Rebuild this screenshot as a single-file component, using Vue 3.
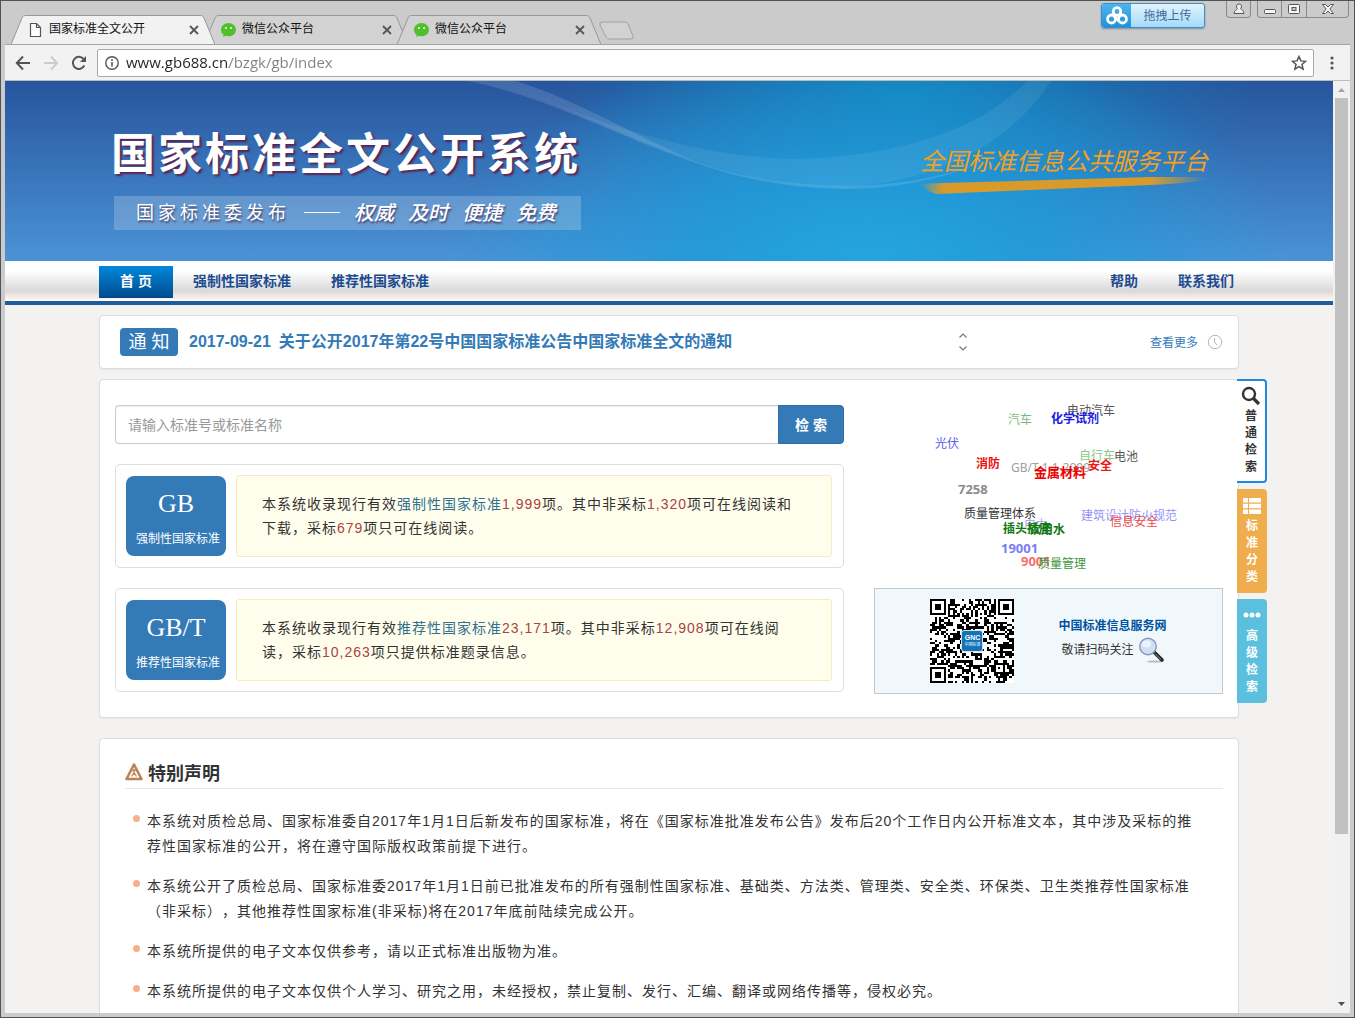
<script setup>
import { ref } from 'vue'

const tabs = [
  { title: '国家标准全文公开', icon: 'page', active: true },
  { title: '微信公众平台', icon: 'wechat', active: false },
  { title: '微信公众平台', icon: 'wechat', active: false },
]

const url = ref('www.gb688.cn/bzgk/gb/index')
const keyword = ref('')

const tags = [
  { text: '汽车', x: 134, y: 15, color: '#7fb97f' },
  { text: '电动汽车', x: 193, y: 6, color: '#555555' },
  { text: '化学试剂', x: 177, y: 14, color: '#1a1ae6', bold: true },
  { text: '光伏', x: 61, y: 39, color: '#5c5cf0' },
  { text: '消防', x: 102, y: 59, color: '#f01010', bold: true },
  { text: 'GB/T 1.1-2009', x: 137, y: 63, color: '#a0a0a0' },
  { text: '自行车', x: 205, y: 51, color: '#8cc88c' },
  { text: '电池', x: 240, y: 52, color: '#555555' },
  { text: '金属材料', x: 160, y: 67, color: '#ee0000', bold: true, big: true },
  { text: '安全', x: 214, y: 61, color: '#ee1515', bold: true },
  { text: '7258', x: 84, y: 84, color: '#8c8c8c', bold: true, big: true },
  { text: '质量管理体系', x: 90, y: 109, color: '#333333' },
  { text: '电力', x: 150, y: 120, color: '#a8a8ff' },
  { text: '建筑设计防火规范', x: 207, y: 111, color: '#9494f8' },
  { text: '信息安全', x: 236, y: 117, color: '#f04848' },
  { text: '插头插座', x: 129, y: 124, color: '#0f7a0f', bold: true },
  { text: '饮用水', x: 155, y: 125, color: '#0f7a0f', bold: true },
  { text: '19001', x: 127, y: 143, color: '#7d7df2', bold: true, big: true },
  { text: '9001', x: 147, y: 156, color: '#f57070', bold: true, big: true },
  { text: '质量管理', x: 164, y: 159, color: '#3c963c' },
]

const statements = [
  '本系统对质检总局、国家标准委自2017年1月1日后新发布的国家标准，将在《国家标准批准发布公告》发布后20个工作日内公开标准文本，其中涉及采标的推荐性国家标准的公开，将在遵守国际版权政策前提下进行。',
  '本系统公开了质检总局、国家标准委2017年1月1日前已批准发布的所有强制性国家标准、基础类、方法类、管理类、安全类、环保类、卫生类推荐性国家标准（非采标），其他推荐性国家标准(非采标)将在2017年底前陆续完成公开。',
  '本系统所提供的电子文本仅供参考，请以正式标准出版物为准。',
  '本系统所提供的电子文本仅供个人学习、研究之用，未经授权，禁止复制、发行、汇编、翻译或网络传播等，侵权必究。',
]

const QR_SIZE = 37

function finderCell(x, y, left, top) {
  const dx = x - left
  const dy = y - top
  if (dx < -1 || dy < -1 || dx > 7 || dy > 7) return null
  const d = Math.max(Math.abs(dx - 3), Math.abs(dy - 3))
  return d === 3 || d <= 1
}

function buildQr() {
  let seed = 20170921
  let path = ''
  for (let y = 0; y < QR_SIZE; y++) {
    for (let x = 0; x < QR_SIZE; x++) {
      seed = (seed * 1103515245 + 12345) % 2147483648
      let on = seed / 2147483648 > 0.48
      if (x === 6) on = y % 2 === 0
      if (y === 6) on = x % 2 === 0
      const ring = Math.max(Math.abs(x - 30), Math.abs(y - 30))
      if (ring <= 2) on = ring !== 1
      for (const [l, t] of [[0, 0], [QR_SIZE - 7, 0], [0, QR_SIZE - 7]]) {
        const cell = finderCell(x, y, l, t)
        if (cell !== null) on = cell
      }
      if (on) path += `M${x} ${y}h1v1h-1z`
    }
  }
  return path
}

const qrPath = buildQr()
</script>

<template>
  <div class="window" lang="zh-CN">
    <header class="titlebar">
      <div class="tabs">
        <div v-for="(tab, i) in tabs" :key="i" class="tab" :class="{ active: tab.active }">
          <svg class="tab-shape" viewBox="0 0 204 29" preserveAspectRatio="none" aria-hidden="true">
            <path d="M0 29.500L11 3C12 1 13 .5 15 .5H189C191 .5 192 1 193 3L204 29.500" />
          </svg>
          <svg v-if="tab.icon === 'page'" class="tab-icon" viewBox="0 0 16 16" aria-hidden="true">
            <path d="M2.500 1.500h6l4 4v9h-10zM8.500 1.500v4h4" fill="#fff" stroke="#555" stroke-width="1.200" />
          </svg>
          <svg v-else class="tab-icon" viewBox="0 0 16 16" aria-hidden="true">
            <path d="M7.500 1C3.400 1 0 4 0 7.700c0 2.100 1 3.900 2.600 5.100L2.200 15l2.500-1.200c.9.300 1.800.5 2.800.5 4.200 0 7.500-3 7.500-6.600S11.700 1 7.500 1z" fill="#4fc02c" />
            <circle cx="5" cy="6" r="1" fill="#fff" /><circle cx="10" cy="6" r="1" fill="#fff" />
          </svg>
          <span class="tab-title">{{ tab.title }}</span>
          <button class="tab-close" aria-label="关闭标签页">
            <svg viewBox="0 0 10 10"><path d="M1 1l8 8M9 1l-8 8" stroke="#555" stroke-width="1.800" /></svg>
          </button>
        </div>
        <button class="new-tab" aria-label="新标签页">
          <svg viewBox="0 0 36 19"><path d="M3 1h23q2 0 3 2l5 12q1 3-2 3H10q-2 0-3-2L1 4q-1-3 2-3z" fill="#d2d2d2" stroke="#a2a2a2" /></svg>
        </button>
      </div>
      <div class="title-tools">
        <button class="upload">
          <span class="upload-logo">
            <svg viewBox="0 0 22 20" fill="none" stroke="#fff" stroke-width="2.800">
              <circle cx="11" cy="5.500" r="3.800" /><circle cx="5.500" cy="13" r="4" /><circle cx="16.500" cy="13" r="4" /><path d="M8 10l5 5" />
            </svg>
          </span>
          <span class="upload-text">拖拽上传</span>
        </button>
        <button class="win-btn user" aria-label="用户">
          <svg viewBox="0 0 12 12"><path d="M6 1a2.500 2.500 0 0 1 1.700 4.400C8 7 11 7 11 10.500H1C1 7 4 7 4.300 5.400A2.500 2.500 0 0 1 6 1z" fill="#eee" stroke="#555" /></svg>
        </button>
        <div class="win-group">
          <button class="win-btn" aria-label="最小化">
            <svg viewBox="0 0 12 12"><rect x=".5" y="6.500" width="11" height="4" rx="1" fill="#f6f6f6" stroke="#555" /></svg>
          </button>
          <button class="win-btn" aria-label="最大化">
            <svg viewBox="0 0 12 12"><rect x=".5" y="1.500" width="11" height="9" rx="1" fill="#f6f6f6" stroke="#555" /><rect x="4" y="4.500" width="4" height="3" fill="#ccc" stroke="#555" /></svg>
          </button>
          <button class="win-btn close" aria-label="关闭">
            <svg viewBox="0 0 12 12"><path d="M.5 1.500h3L6 4l2.500-2.500h3L7.800 6l3.700 4.500h-3L6 8l-2.500 2.500h-3L4.200 6z" fill="#f6f6f6" stroke="#555" /></svg>
          </button>
        </div>
      </div>
    </header>

    <div class="toolbar">
      <button class="tool" aria-label="后退">
        <svg viewBox="0 0 16 16"><path d="M15 8H2M8 1.500L1.800 8 8 14.500" fill="none" stroke="#555" stroke-width="2" /></svg>
      </button>
      <button class="tool" aria-label="前进">
        <svg viewBox="0 0 16 16"><path d="M1 8h13M8 1.500L14.200 8 8 14.500" fill="none" stroke="#ccc" stroke-width="2" /></svg>
      </button>
      <button class="tool" aria-label="刷新">
        <svg viewBox="0 0 16 16"><path d="M13.300 10.500A6 6 0 1 1 12.500 4" fill="none" stroke="#555" stroke-width="2" /><path d="M15 1v6H9z" fill="#555" /></svg>
      </button>
      <div class="omnibox">
        <svg class="info" viewBox="0 0 14 14" aria-hidden="true"><circle cx="7" cy="7" r="6.200" fill="none" stroke="#555" stroke-width="1.400" /><path d="M7 6v4.500M7 3.300v1.600" stroke="#555" stroke-width="1.600" /></svg>
        <input v-model="url" type="text" class="url" aria-label="地址栏" />
        <button class="star" aria-label="收藏">
          <svg viewBox="0 0 16 16"><path d="M8 1.500l1.900 4.400 4.700.4-3.600 3.100 1.100 4.700L8 11.600l-4.100 2.500L5 9.400 1.400 6.300l4.700-.4z" fill="none" stroke="#555" stroke-width="1.500" /></svg>
        </button>
      </div>
      <button class="menu" aria-label="菜单">
        <svg viewBox="0 0 4 14" fill="#555"><circle cx="2" cy="2" r="1.600" /><circle cx="2" cy="7" r="1.600" /><circle cx="2" cy="12" r="1.600" /></svg>
      </button>
    </div>

    <div class="viewport">
      <main class="page">
        <div class="banner">
          <svg class="swoosh" viewBox="0 0 1328 180" preserveAspectRatio="xMidYMid slice" aria-hidden="true">
            <path d="M500 0C580 40 690 76 790 78C890 76 975 50 1022 0H1046C1000 70 920 104 830 106C730 104 630 60 500 0z" fill="#fff" fill-opacity=".07" />
            <path d="M462 0C540 15 600 50 680 78C770 112 880 122 975 82C880 118 760 108 680 76C610 44 560 14 510 0z" fill="#fff" fill-opacity=".13" />
          </svg>
          <div class="container banner-inner">
            <div class="brand">
              <h1>国家标准全文公开系统</h1>
              <p class="slogan">
                <span class="issuer">国家标准委发布</span>
                <span class="dash"></span>
                <em>权威</em><em>及时</em><em>便捷</em><em>免费</em>
              </p>
            </div>
            <div class="platform">
              <span>全国标准信息公共服务平台</span>
              <svg viewBox="0 0 288 18" preserveAspectRatio="none" aria-hidden="true">
                <defs>
                  <linearGradient id="brush"><stop offset="0" stop-color="#e39a22" stop-opacity="0" /><stop offset=".08" stop-color="#d99a2c" /><stop offset=".8" stop-color="#d99a2c" /><stop offset="1" stop-color="#d99a2c" stop-opacity="0" /></linearGradient>
                </defs>
                <path d="M0 7Q20 6 60 5L230 0Q270-1 288 1Q280 6 230 8L110 13L16 17Q6 14 0 7z" fill="url(#brush)" />
              </svg>
            </div>
          </div>
        </div>

        <nav class="nav">
          <div class="container nav-inner">
            <a href="#" class="home">首 页</a>
            <a href="#" class="link">强制性国家标准</a>
            <a href="#" class="link">推荐性国家标准</a>
            <div class="nav-right">
              <a href="#">帮助</a>
              <a href="#">联系我们</a>
            </div>
          </div>
        </nav>

        <div class="container content">
          <section class="card notice">
            <span class="notice-badge">通 知</span>
            <a href="#" class="notice-link"><span>2017-09-21</span><span>关于公开2017年第22号中国国家标准公告中国家标准全文的通知</span></a>
            <div class="pager">
              <button aria-label="上一条"><svg viewBox="0 0 8 5"><path d="M.5 4.500L4 1l3.500 3.500" fill="none" stroke="#777" stroke-width="1.200" /></svg></button>
              <button aria-label="下一条"><svg viewBox="0 0 8 5"><path d="M.5.5L4 4 7.500.5" fill="none" stroke="#777" stroke-width="1.200" /></svg></button>
            </div>
            <a href="#" class="more">查看更多</a>
            <svg class="clock" viewBox="0 0 16 16" aria-hidden="true"><circle cx="8" cy="8" r="6.700" fill="none" stroke="#b5b5b5" /><path d="M7.500 4v4l3 3.500" fill="none" stroke="#b5b5b5" /></svg>
          </section>

          <section class="card main-card">
            <div class="left">
              <form class="search" @submit.prevent>
                <input v-model="keyword" type="text" placeholder="请输入标准号或标准名称" aria-label="标准号或标准名称" />
                <button type="submit">检 索</button>
              </form>
              <article class="kind">
                <a href="#" class="kind-badge"><b>GB</b><span>强制性国家标准</span></a>
                <div class="kind-info">
                  <p>本系统收录现行有效<a href="#">强制性国家标准</a><i>1,999</i>项。其中非采标<i>1,320</i>项可在线阅读和下载，采标<i>679</i>项只可在线阅读。</p>
                </div>
              </article>
              <article class="kind">
                <a href="#" class="kind-badge"><b>GB/T</b><span>推荐性国家标准</span></a>
                <div class="kind-info">
                  <p>本系统收录现行有效<a href="#">推荐性国家标准</a><i>23,171</i>项。其中非采标<i>12,908</i>项可在线阅读，采标<i>10,263</i>项只提供标准题录信息。</p>
                </div>
              </article>
            </div>
            <div class="right">
              <div class="cloud">
                <a
                  v-for="tag in tags"
                  :key="tag.text"
                  href="#"
                  :class="{ bold: tag.bold, big: tag.big }"
                  :style="{ left: tag.x + 'px', top: tag.y - 9 + 'px', color: tag.color }"
                >{{ tag.text }}</a>
              </div>
              <div class="qr-box">
                <div class="qr">
                  <svg :viewBox="`0 0 ${QR_SIZE} ${QR_SIZE}`" shape-rendering="crispEdges" role="img" aria-label="二维码">
                    <rect :width="QR_SIZE" :height="QR_SIZE" fill="#fff" />
                    <path :d="qrPath" fill="#000" />
                  </svg>
                  <span class="qr-logo"><b>GNC</b><small>中国标准</small></span>
                </div>
                <div class="qr-text">
                  <a href="#">中国标准信息服务网</a>
                  <p>
                    敬请扫码关注
                    <svg viewBox="0 0 26 26" aria-hidden="true">
                      <ellipse cx="17" cy="24.500" rx="8" ry="1" fill="#000" fill-opacity=".25" />
                      <path d="M16 15l8 8" stroke="#222" stroke-width="3.500" stroke-linecap="round" />
                      <path d="M17 16.500l6 6" stroke="#999" stroke-width="1" />
                      <circle cx="10" cy="9.500" r="8.300" fill="#cfdff5" stroke="#8a9bb5" stroke-width="1.400" />
                      <ellipse cx="8.500" cy="7" rx="4.500" ry="3.500" fill="#fff" fill-opacity=".6" />
                    </svg>
                  </p>
                </div>
              </div>
            </div>

            <div class="side-tabs">
              <button class="side side-search">
                <svg viewBox="0 0 20 20"><circle cx="8" cy="8" r="6" fill="none" stroke="#333" stroke-width="2.400" /><path d="M12.500 12.500l5.500 5.500" stroke="#333" stroke-width="3.200" /></svg>
                <span>普通检索</span>
              </button>
              <button class="side side-class">
                <svg viewBox="0 0 20 20" fill="#fff"><path d="M1 2h5v4.500H1zM7 2h12v4.500H7zM1 7.800h5v4.500H1zM7 7.800h12v4.500H7zM1 13.600h5V18H1zM7 13.600h12V18H7z" /></svg>
                <span>标准分类</span>
              </button>
              <button class="side side-advanced">
                <svg viewBox="0 0 20 20" fill="#fff"><circle cx="4" cy="9" r="2.500" /><circle cx="10" cy="9" r="2.500" /><circle cx="16" cy="9" r="2.500" /></svg>
                <span>高级检索</span>
              </button>
            </div>
          </section>

          <section class="card declare">
            <h2>
              <svg viewBox="0 0 18 18" aria-hidden="true">
                <path d="M9 1.500L16.500 16h-15z" fill="#fff" stroke="#b98557" stroke-width="2.600" stroke-linejoin="round" />
                <path d="M9 6v6M7.300 7.500h3.400M9 9.500l-2.500 4M9 9.500l2.500 4" stroke="#b98557" stroke-width="1.300" fill="none" />
              </svg>
              特别声明
            </h2>
            <ul>
              <li v-for="s in statements" :key="s">{{ s }}</li>
            </ul>
          </section>
        </div>
      </main>

      <div class="scrollbar" aria-hidden="true">
        <svg viewBox="0 0 17 17"><path d="M5 11l3.500-4 3.500 4z" fill="#a3a3a3" /></svg>
        <div class="track"><div class="thumb"></div></div>
        <svg viewBox="0 0 17 17"><path d="M5 6l3.500 4L12 6z" fill="#505050" /></svg>
      </div>
    </div>
  </div>
</template>

<style>
body {
  margin: 0;
  overflow: hidden;
}
</style>

<style scoped>
* {
  box-sizing: border-box;
}
.window {
  display: flex;
  flex-direction: column;
  height: 100vh;
  padding: 0 4px 4px;
  border: 1px solid #505256;
  background: #cbcbcb;
  font-family: "Liberation Sans", "Noto Sans CJK SC", sans-serif;
  font-size: 12px;
  color: #333;
  text-spacing-trim: space-all;
}
button {
  margin: 0;
  padding: 0;
  border: 0;
  background: none;
  font: inherit;
  color: inherit;
}
a {
  text-decoration: none;
}
h1, h2, p, ul {
  margin: 0;
  padding: 0;
}
svg {
  display: block;
  flex: none;
}

/* Browser frame */
.titlebar {
  display: flex;
  justify-content: space-between;
  height: 43px;
  flex: none;
}
.tabs {
  display: flex;
  align-items: flex-end;
  padding-left: 6px;
}
.tab {
  position: relative;
  display: flex;
  align-items: center;
  width: 204px;
  height: 29px;
  margin-right: -11px;
  padding: 0 16px 0 17px;
  color: #111;
}
.tab-shape {
  position: absolute;
  inset: 0;
  width: 100%;
  height: 100%;
  fill: #d2d2d2;
  stroke: #989898;
}
.tab.active {
  z-index: 1;
}
.tab.active .tab-shape {
  fill: #f2f2f2;
}
.tab-icon {
  position: relative;
  width: 16px;
  height: 16px;
}
.tab-title {
  position: relative;
  flex: 1;
  margin-left: 5px;
  line-height: 16px;
  padding-bottom: 2px;
}
.tab-close {
  position: relative;
}
.tab-close svg {
  width: 10px;
  height: 10px;
}
.new-tab {
  margin: 0 0 4px 9px;
}
.new-tab svg {
  width: 36px;
  height: 19px;
}
.title-tools {
  display: flex;
  align-items: flex-start;
}
.upload {
  display: flex;
  width: 104px;
  height: 25px;
  margin: 2px 21px 0 0;
  border: 1px solid #3a8fc8;
  border-radius: 3px;
  overflow: hidden;
  background: linear-gradient(#e2f3fd, #a6dafb);
  box-shadow: 0 1px 2px #7a8fa0;
}
.upload-logo {
  display: flex;
  align-items: center;
  justify-content: center;
  width: 29px;
  height: 100%;
  background: linear-gradient(#4ab5ee, #2191dc);
}
.upload-logo svg {
  width: 22px;
  height: 20px;
}
.upload-text {
  flex: 1;
  line-height: 25px;
  color: #3f6c95;
}
.win-btn {
  display: flex;
  align-items: center;
  justify-content: center;
  width: 25px;
  height: 17px;
  border: 1px solid #8a8a8a;
  border-top: 0;
}
.win-btn svg {
  width: 12px;
  height: 12px;
}
.user {
  margin-right: 6px;
  border-radius: 0 0 4px 4px;
}
.win-group .win-btn + .win-btn {
  border-left: 0;
}
.win-group {
  display: flex;
  margin-right: 1px;
}
.win-group .win-btn:first-child {
  border-radius: 0 0 0 4px;
}
.win-btn.close {
  width: 42px;
  border-radius: 0 0 4px 0;
}
.toolbar {
  display: flex;
  align-items: center;
  flex: none;
  height: 37px;
  padding: 0 16px 0 10px;
  border: 1px solid #a3a3a3;
  border-bottom-color: #bbb;
  border-left: 0;
  border-right: 0;
  background: #f2f2f2;
}
.tool {
  margin-right: 12px;
}
.tool svg {
  width: 16px;
  height: 16px;
}
.omnibox {
  display: flex;
  align-items: center;
  flex: 1;
  height: 28px;
  margin-right: 16px;
  margin-left: -2px;
  padding: 0 6px 0 7px;
  border: 1px solid #a9a9a9;
  border-radius: 2px;
  background: #fff;
}
.info {
  width: 14px;
  height: 14px;
}
.url {
  flex: 1;
  min-width: 0;
  margin-left: 7px;
  padding: 0 0 2px;
  border: 0;
  outline: 0;
  background: linear-gradient(90deg, #222 103px, #808080 103px);
  background-clip: text;
  -webkit-background-clip: text;
  -webkit-text-fill-color: transparent;
  color: #222;
  font: 15px/24px "Open Sans", sans-serif;
}
.star svg {
  width: 16px;
  height: 16px;
}
.menu svg {
  width: 4px;
  height: 14px;
}
.viewport {
  display: flex;
  flex: 1;
  min-height: 0;
}
.page {
  flex: 1;
  min-width: 0;
  overflow: hidden;
  background: #f3f2f1;
}
.scrollbar {
  display: flex;
  flex-direction: column;
  width: 17px;
  flex: none;
  background: #f1f1f1;
}
.scrollbar svg {
  width: 17px;
  height: 17px;
}
.track {
  flex: 1;
  padding: 0 2px;
}
.thumb {
  height: 82%;
  background: #c1c1c1;
}

/* Site header */
.container {
  max-width: 1140px;
  margin: 0 auto;
}
.banner {
  position: relative;
  height: 180px;
  background:
    radial-gradient(ellipse 32% 120% at 65% 100%, #24a5e0 0%, rgba(32, 155, 218, 0.85) 40%, rgba(32, 150, 215, 0) 100%),
    radial-gradient(ellipse 26% 100% at 68% 10%, rgba(15, 135, 190, 0.95), rgba(15, 130, 190, 0)),
    linear-gradient(#27559d, #4b93d6);
}
.swoosh {
  position: absolute;
  inset: 0;
  width: 100%;
  height: 100%;
}
.banner-inner {
  position: relative;
  display: flex;
  justify-content: space-between;
  align-items: flex-start;
  padding: 46px 31px 0 12px;
}
h1 {
  font-size: 44px;
  line-height: 56px;
  letter-spacing: 3px;
  font-weight: 700;
  color: #fff;
  text-shadow: 2px 2px 2px #5b2352;
}
.slogan {
  display: flex;
  align-items: center;
  gap: 14px;
  width: 467px;
  height: 34px;
  margin: 13px 0 0 3px;
  padding: 0 0 4px 22px;
  background: rgba(255, 255, 255, 0.2);
  color: #fff;
  font-size: 18px;
  text-shadow: 1px 2px 2px #4b4470;
}
.issuer {
  letter-spacing: 4px;
}
.dash {
  width: 36px;
  height: 1px;
  margin-top: 2px;
  background: #fff;
}
.slogan em {
  font-size: 20px;
  font-weight: 500;
}
.platform {
  padding-top: 18px;
  color: #f5a01c;
}
.platform span {
  display: block;
  font-size: 24px;
  line-height: 34px;
  font-style: italic;
}
.platform svg {
  width: 288px;
  height: 18px;
  margin-top: -2px;
}
.nav {
  height: 44px;
  border-bottom: 4px solid #1f5c9c;
  background: linear-gradient(#fff 0%, #fff 25%, #d9d9d9 75%, #f6efe8 92%, #fff 100%);
}
.nav-inner {
  display: flex;
  align-items: center;
  height: 41px;
  font-size: 14px;
  line-height: 32px;
  font-weight: 700;
}
.nav a {
  height: 32px;
  line-height: 30px;
  color: #1d4b8f;
}
.nav .home {
  padding: 0 21px;
  color: #fff;
  background: linear-gradient(#0088dc, #004a8c);
}
.nav .link {
  padding: 0 20px;
}
.nav-right {
  display: flex;
  gap: 40px;
  margin-left: auto;
  padding-right: 5px;
}

/* Cards */
.content {
  padding-top: 10px;
}
.card {
  border: 1px solid #ddd;
  border-radius: 4px;
  background: #fff;
  box-shadow: 0 1px 1px rgba(0, 0, 0, 0.05);
}
.notice {
  display: flex;
  align-items: center;
  height: 54px;
  padding: 0 15px 0 20px;
}
.notice-badge {
  width: 58px;
  border-radius: 4px;
  background: #337ab7;
  color: #fff;
  font-size: 18px;
  line-height: 28px;
  text-align: center;
}
.notice-link {
  display: flex;
  align-items: baseline;
  gap: 8px;
  margin-left: 11px;
  padding-bottom: 4px;
  color: #337ab7;
  font-size: 16px;
  font-weight: 700;
  white-space: nowrap;
}
.pager {
  display: flex;
  flex-direction: column;
  gap: 8px;
  margin: 0 183px 0 auto;
}
.pager svg {
  width: 8px;
  height: 5px;
}
.more {
  padding-bottom: 2px;
  color: #337ab7;
}
.clock {
  width: 16px;
  height: 16px;
  margin-left: 9px;
}
.main-card {
  position: relative;
  display: grid;
  grid-template-columns: 1fr 349px;
  gap: 30px;
  margin-top: 10px;
  padding: 25px 15px;
}
.left {
  display: flex;
  flex-direction: column;
  gap: 20px;
}
.search {
  display: flex;
  height: 39px;
  font-size: 14px;
}
.search input {
  flex: 1;
  min-width: 0;
  padding: 0 12px;
  border: 1px solid #ccc;
  border-right: 0;
  border-radius: 4px 0 0 4px;
  outline: 0;
  font: inherit;
  color: #555;
  box-shadow: inset 0 1px 1px rgba(0, 0, 0, 0.075);
}
.search input::placeholder {
  color: #999;
}
.search button {
  width: 66px;
  padding-bottom: 2px;
  border: 1px solid #2e6da4;
  border-radius: 0 4px 4px 0;
  background: #337ab7;
  color: #fff;
  font-weight: 700;
}
.kind {
  display: flex;
  align-items: center;
  gap: 10px;
  height: 104px;
  padding: 0 11px 0 10px;
  border: 1px solid #ddd;
  border-radius: 5px;
}
.kind-badge {
  display: flex;
  flex-direction: column;
  align-items: center;
  flex: none;
  width: 100px;
  height: 80px;
  padding-top: 8px;
  border-radius: 8px;
  background: #337ab7;
  color: #fff;
}
.kind-badge b {
  font: 400 26px/40px "Liberation Serif", serif;
}
.kind-badge span {
  padding-left: 4px;
  line-height: 30px;
}
.kind-info {
  display: flex;
  align-items: center;
  flex: 1;
  height: 82px;
  padding: 0 25px;
  border: 1px solid #f5ebc4;
  border-radius: 3px;
  background: #fffeec;
}
.kind-info p {
  font-size: 14px;
  line-height: 24px;
  letter-spacing: 1px;
}
.kind-info a {
  color: #31708f;
}
.kind-info i {
  font-style: normal;
  color: #a94442;
}
.right {
  display: flex;
  flex-direction: column;
}
.cloud {
  position: relative;
  flex: 1;
}
.cloud a {
  position: absolute;
  line-height: 18px;
  white-space: nowrap;
  font-family: "Noto Sans", "Noto Sans CJK SC", sans-serif;
}
.cloud .bold {
  font-weight: 700;
}
.cloud .big {
  font-size: 13px;
}
.qr-box {
  display: flex;
  align-items: center;
  justify-content: center;
  gap: 44px;
  height: 106px;
  margin-bottom: -2px;
  border: 1px solid #c4c8cb;
  background: #f1f8fc;
}
.qr {
  position: relative;
}
.qr > svg {
  width: 84px;
  height: 84px;
}
.qr-logo {
  position: absolute;
  top: 31px;
  left: 31px;
  display: flex;
  flex-direction: column;
  align-items: center;
  justify-content: center;
  width: 22px;
  height: 22px;
  border: 1px solid #cfe3f3;
  border-radius: 3px;
  background: #1273b8;
  color: #fff;
  white-space: nowrap;
}
.qr-logo b {
  font-size: 7px;
  line-height: 8px;
}
.qr-logo small {
  font-size: 4px;
  line-height: 6px;
}
.qr-text {
  padding-bottom: 6px;
  line-height: 24px;
}
.qr-text a {
  color: #00539f;
  font-weight: 700;
}
.qr-text p {
  display: flex;
  align-items: center;
  gap: 4px;
  height: 24px;
  padding-left: 3px;
}
.qr-text svg {
  width: 26px;
  height: 26px;
}
.side-tabs {
  position: absolute;
  top: -1px;
  left: calc(100% - 1px);
  display: flex;
  flex-direction: column;
  gap: 6px;
}
.side {
  display: flex;
  flex-direction: column;
  align-items: center;
  width: 30px;
  height: 104px;
  padding-top: 7px;
  border-radius: 0 4px 4px 0;
  color: #fff;
  font-weight: 700;
}
.side svg {
  width: 20px;
  height: 20px;
}
.side span {
  width: 12px;
  margin-top: 2px;
  line-height: 17px;
}
.side-search {
  padding-top: 5px;
  border: 2px solid #1a8be0;
  border-left: 0;
  background: #fff;
  color: #333;
}
.side-class {
  background: #f0ad4e;
}
.side-advanced {
  background: #5bc0de;
}

/* Declaration */
.declare {
  margin-top: 20px;
  padding: 20px 15px 20px 25px;
}
.declare h2 {
  display: flex;
  align-items: center;
  gap: 5px;
  height: 30px;
  padding-bottom: 4px;
  border-bottom: 1px solid #e8e8e8;
  font-size: 18px;
  font-weight: 700;
}
.declare h2 svg {
  width: 18px;
  height: 18px;
}
.declare ul {
  padding: 20px 20px 0 22px;
  list-style: none;
}
.declare li {
  position: relative;
  margin-bottom: 15px;
  font-size: 14px;
  line-height: 25px;
  letter-spacing: 1px;
}
.declare li::before {
  content: "";
  position: absolute;
  top: 6px;
  left: -14px;
  width: 7px;
  height: 7px;
  border-radius: 50%;
  background: #f3b184;
}
</style>
